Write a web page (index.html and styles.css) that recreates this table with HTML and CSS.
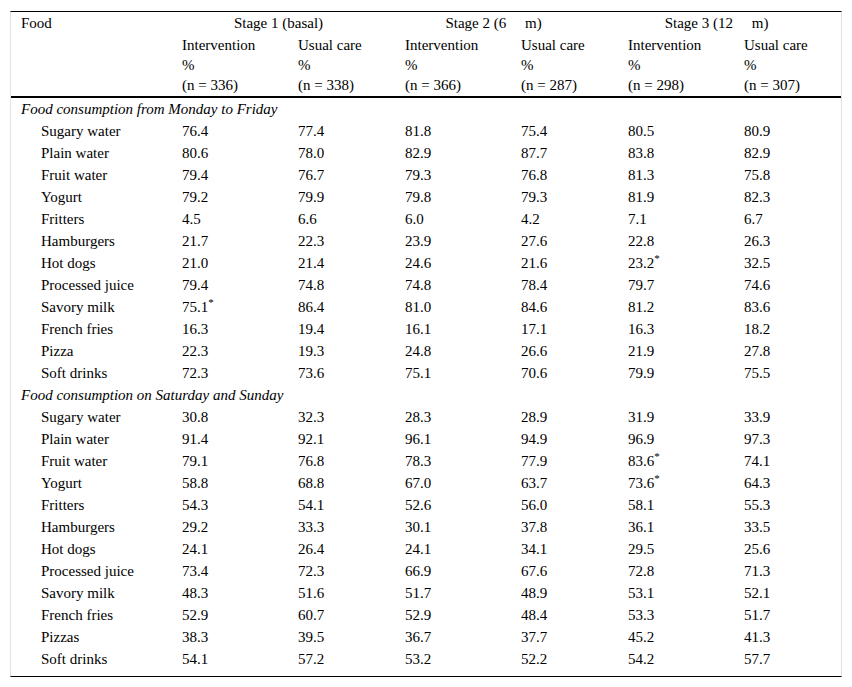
FILE: index.html
```html
<!DOCTYPE html>
<html>
<head>
<meta charset="utf-8">
<link rel="stylesheet" href="styles.css">
</head>
<body>
<div class="frame">
<table class="data">
<colgroup>
<col class="c-food"><col class="c-int"><col class="c-uc"><col class="c-int"><col class="c-uc"><col class="c-int"><col class="c-uc">
</colgroup>
<thead>
<tr class="h1">
<th class="food">Food</th>
<th class="stage s1" colspan="2">Stage 1 (basal)</th>
<th class="stage s2" colspan="2">Stage 2 (6&nbsp;&nbsp;&nbsp;&nbsp;&nbsp;m)</th>
<th class="stage s3" colspan="2">Stage 3 (12&nbsp;&nbsp;&nbsp;&nbsp;&nbsp;m)</th>
</tr>
<tr class="h2">
<th></th>
<th>Intervention<br>%<br>(n = 336)</th>
<th>Usual care<br>%<br>(n = 338)</th>
<th>Intervention<br>%<br>(n = 366)</th>
<th>Usual care<br>%<br>(n = 287)</th>
<th>Intervention<br>%<br>(n = 298)</th>
<th>Usual care<br>%<br>(n = 307)</th>
</tr>
</thead>
<tbody>
<tr class="section"><td colspan="7">Food consumption from Monday to Friday</td></tr>
<tr><td class="item">Sugary water</td><td>76.4</td><td>77.4</td><td>81.8</td><td>75.4</td><td>80.5</td><td>80.9</td></tr>
<tr><td class="item">Plain water</td><td>80.6</td><td>78.0</td><td>82.9</td><td>87.7</td><td>83.8</td><td>82.9</td></tr>
<tr><td class="item">Fruit water</td><td>79.4</td><td>76.7</td><td>79.3</td><td>76.8</td><td>81.3</td><td>75.8</td></tr>
<tr><td class="item">Yogurt</td><td>79.2</td><td>79.9</td><td>79.8</td><td>79.3</td><td>81.9</td><td>82.3</td></tr>
<tr><td class="item">Fritters</td><td>4.5</td><td>6.6</td><td>6.0</td><td>4.2</td><td>7.1</td><td>6.7</td></tr>
<tr><td class="item">Hamburgers</td><td>21.7</td><td>22.3</td><td>23.9</td><td>27.6</td><td>22.8</td><td>26.3</td></tr>
<tr><td class="item">Hot dogs</td><td>21.0</td><td>21.4</td><td>24.6</td><td>21.6</td><td>23.2<sup>*</sup></td><td>32.5</td></tr>
<tr><td class="item">Processed juice</td><td>79.4</td><td>74.8</td><td>74.8</td><td>78.4</td><td>79.7</td><td>74.6</td></tr>
<tr><td class="item">Savory milk</td><td>75.1<sup>*</sup></td><td>86.4</td><td>81.0</td><td>84.6</td><td>81.2</td><td>83.6</td></tr>
<tr><td class="item">French fries</td><td>16.3</td><td>19.4</td><td>16.1</td><td>17.1</td><td>16.3</td><td>18.2</td></tr>
<tr><td class="item">Pizza</td><td>22.3</td><td>19.3</td><td>24.8</td><td>26.6</td><td>21.9</td><td>27.8</td></tr>
<tr><td class="item">Soft drinks</td><td>72.3</td><td>73.6</td><td>75.1</td><td>70.6</td><td>79.9</td><td>75.5</td></tr>
<tr class="section"><td colspan="7">Food consumption on Saturday and Sunday</td></tr>
<tr><td class="item">Sugary water</td><td>30.8</td><td>32.3</td><td>28.3</td><td>28.9</td><td>31.9</td><td>33.9</td></tr>
<tr><td class="item">Plain water</td><td>91.4</td><td>92.1</td><td>96.1</td><td>94.9</td><td>96.9</td><td>97.3</td></tr>
<tr><td class="item">Fruit water</td><td>79.1</td><td>76.8</td><td>78.3</td><td>77.9</td><td>83.6<sup>*</sup></td><td>74.1</td></tr>
<tr><td class="item">Yogurt</td><td>58.8</td><td>68.8</td><td>67.0</td><td>63.7</td><td>73.6<sup>*</sup></td><td>64.3</td></tr>
<tr><td class="item">Fritters</td><td>54.3</td><td>54.1</td><td>52.6</td><td>56.0</td><td>58.1</td><td>55.3</td></tr>
<tr><td class="item">Hamburgers</td><td>29.2</td><td>33.3</td><td>30.1</td><td>37.8</td><td>36.1</td><td>33.5</td></tr>
<tr><td class="item">Hot dogs</td><td>24.1</td><td>26.4</td><td>24.1</td><td>34.1</td><td>29.5</td><td>25.6</td></tr>
<tr><td class="item">Processed juice</td><td>73.4</td><td>72.3</td><td>66.9</td><td>67.6</td><td>72.8</td><td>71.3</td></tr>
<tr><td class="item">Savory milk</td><td>48.3</td><td>51.6</td><td>51.7</td><td>48.9</td><td>53.1</td><td>52.1</td></tr>
<tr><td class="item">French fries</td><td>52.9</td><td>60.7</td><td>52.9</td><td>48.4</td><td>53.3</td><td>51.7</td></tr>
<tr><td class="item">Pizzas</td><td>38.3</td><td>39.5</td><td>36.7</td><td>37.7</td><td>45.2</td><td>41.3</td></tr>
<tr class="last"><td class="item">Soft drinks</td><td>54.1</td><td>57.2</td><td>53.2</td><td>52.2</td><td>54.2</td><td>57.7</td></tr>
</tbody>
</table>
</div>
</body>
</html>
```
FILE: styles.css
```css
html, body {
  margin: 0;
  padding: 0;
  background: #ffffff;
}
body {
  font-family: "Liberation Serif", "Times New Roman", serif;
  font-size: 15px;
  color: #000000;
}
.frame {
  margin: 11px 0 0 10px;
  width: 832px;
  box-sizing: border-box;
  border-left: 1px solid #e2e2e2;
  border-right: 1px solid #e2e2e2;
  border-top: 1px solid #000000;
  border-bottom: 1px solid #000000;
  padding-bottom: 6px;
}
.data {
  width: 830px;
  border-collapse: collapse;
  table-layout: fixed;
}
.c-food { width: 161px; }
.c-int { width: 116px; }
.c-uc { width: 107px; }
.data th, .data td {
  padding: 0 0 0 10px;
  text-align: left;
  font-weight: normal;
  white-space: nowrap;
  vertical-align: top;
}
.h1 th {
  line-height: 23px;
}
.h1 th.stage {
  text-align: center;
}
.h1 th.s1 { padding-right: 20px; }
.h1 th.s2 { padding-right: 36px; }
.h1 th.s3 { padding-right: 36px; }
.h2 th {
  line-height: 20px;
  padding-bottom: 1px;
  border-bottom: 2px solid #000000;
}
.data td {
  line-height: 22px;
}
.section td {
  font-style: italic;
}
.data td.item {
  padding-left: 30px;
}
sup {
  font-size: 11px;
  line-height: 0;
  vertical-align: 6px;
}
```
